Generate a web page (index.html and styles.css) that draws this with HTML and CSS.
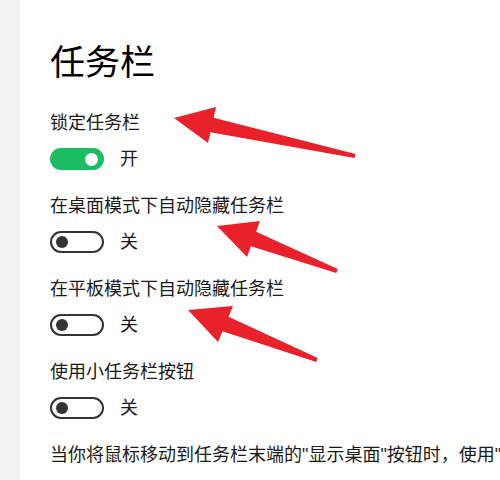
FILE: index.html
```html
<!DOCTYPE html>
<html lang="zh-CN">

<head>
    <meta charset="UTF-8">
    <meta name="viewport" content="width=device-width, initial-scale=1.0">
    <title>任务栏</title>
    <link rel="stylesheet" href="styles.css">
</head>

<body>
    <div class="window">
        <!-- Left navigation strip -->
        <div class="sidebar"></div>

        <!-- Settings page -->
        <div class="content">
            <h1 class="page-title">任务栏</h1>

            <div class="setting">
                <div class="setting-label">锁定任务栏</div>
                <div class="toggle-row">
                    <span class="toggle on"><span class="knob"></span></span>
                    <span class="toggle-text">开</span>
                </div>
            </div>

            <div class="setting">
                <div class="setting-label">在桌面模式下自动隐藏任务栏</div>
                <div class="toggle-row">
                    <span class="toggle"><span class="knob"></span></span>
                    <span class="toggle-text">关</span>
                </div>
            </div>

            <div class="setting">
                <div class="setting-label">在平板模式下自动隐藏任务栏</div>
                <div class="toggle-row">
                    <span class="toggle"><span class="knob"></span></span>
                    <span class="toggle-text">关</span>
                </div>
            </div>

            <div class="setting">
                <div class="setting-label">使用小任务栏按钮</div>
                <div class="toggle-row">
                    <span class="toggle"><span class="knob"></span></span>
                    <span class="toggle-text">关</span>
                </div>
            </div>

            <div class="setting">
                <div class="setting-label">当你将鼠标移动到任务栏末端的"显示桌面"按钮时，使用"速览"预览桌面</div>
                <div class="toggle-row">
                    <span class="toggle on"><span class="knob"></span></span>
                    <span class="toggle-text">开</span>
                </div>
            </div>
        </div>

        <!-- Red annotation arrows drawn over the screenshot -->
        <svg class="annotations" width="500" height="480" viewBox="0 0 500 480">
            <polygon points="174,118 216,107 213.6,117.8 355.4,154 354.6,158 210.4,132.2 208,143" />
            <polygon points="217,226 260,221 256.1,231.8 337.7,269.1 336.3,272.9 250.9,246.2 247,257" />
            <polygon points="188,310 233,306 228.5,316.8 317.7,358.1 316.3,361.9 222.5,331.2 218,342" />
        </svg>
    </div>
</body>

</html>
```

FILE: styles.css
```css
/* General Body Styling */
body {
    margin: 0;
    font-family: "Liberation Sans", "Noto Sans CJK SC", sans-serif;
    color: #1a1a1a;
    background-color: #fff;
}

.window {
    position: relative;
    display: flex;
    width: 500px;
    height: 480px;
    overflow: hidden;
}

.sidebar {
    width: 20px;
    flex-shrink: 0;
    background-color: #f2f2f2;
}

.content {
    flex: 1;
    min-width: 0;
    padding: 41px 0 0 30px;
}

.page-title {
    margin: 0 0 26px;
    font-size: 35px;
    line-height: 44px;
    font-weight: normal;
    color: #000;
}

.setting {
    margin-bottom: 23px;
}

.setting-label {
    font-size: 18px;
    line-height: 24px;
    white-space: nowrap;
}

.toggle-row {
    display: flex;
    align-items: center;
    height: 24px;
    margin-top: 12px;
}

.toggle {
    box-sizing: border-box;
    display: flex;
    align-items: center;
    width: 54px;
    height: 22px;
    padding: 0 4px;
    border: 2px solid #333;
    border-radius: 11px;
}

.toggle .knob {
    width: 12px;
    height: 12px;
    border-radius: 50%;
    background-color: #333;
}

.toggle.on {
    justify-content: flex-end;
    border-color: #1cbd62;
    background-color: #1cbd62;
}

.toggle.on .knob {
    width: 13px;
    height: 13px;
    background-color: #fff;
}

.toggle-text {
    margin-left: 16px;
    font-size: 18px;
    line-height: 24px;
}

.annotations {
    position: absolute;
    top: 0;
    left: 0;
    fill: #e8212a;
}
```
